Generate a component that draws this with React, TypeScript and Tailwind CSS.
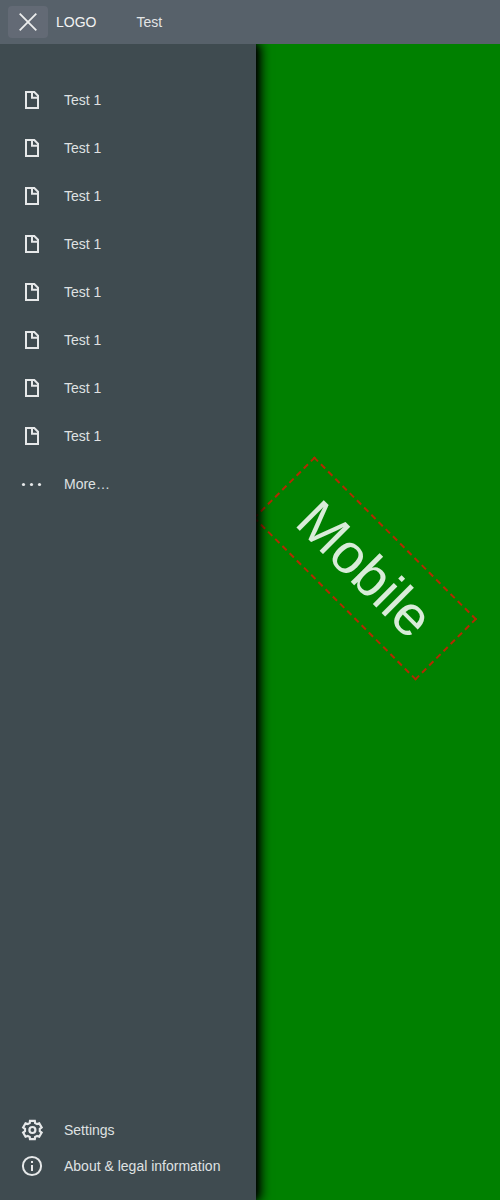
import type { ReactNode } from "react";

function FileIcon() {
  return (
    <svg className="size-6" viewBox="0 0 24 24" fill="none" stroke="#e6e8e9" strokeWidth="2">
      <path d="M6 4H14.3L18 7.7V20H6Z" />
      <path d="M12 4V9.8H18" />
    </svg>
  );
}

function MoreIcon() {
  return (
    <svg className="size-6" viewBox="0 0 24 24" fill="#e6e8e9">
      <circle cx="3.5" cy="12.5" r="1.6" />
      <circle cx="11.5" cy="12.5" r="1.6" />
      <circle cx="19.5" cy="12.5" r="1.6" />
    </svg>
  );
}

function GearIcon() {
  return (
    <svg className="size-6" viewBox="-12.4 -12 24 24" fill="none" stroke="#e6e8e9" strokeWidth="2.2">
      <path d="M-2.4 -9.2H2.4L2.7 -7L4.7 -5.9L6.85 -6.7L9.25 -2.55L7.4 -1.1V1.1L9.25 2.55L6.85 6.7L4.7 5.9L2.7 7L2.4 9.2H-2.4L-2.7 7L-4.7 5.9L-6.85 6.7L-9.25 2.55L-7.4 1.1V-1.1L-9.25 -2.55L-6.85 -6.7L-4.7 -5.9L-2.7 -7Z" />
      <circle r="3" />
    </svg>
  );
}

function InfoIcon() {
  return (
    <svg className="size-6" viewBox="0 0 24 24" fill="none" stroke="#e6e8e9" strokeWidth="2">
      <circle cx="12" cy="12" r="9.1" />
      <path d="M12 11V17M12 7V9" />
    </svg>
  );
}

function Item({ icon, label, compact }: { icon: ReactNode; label: string; compact?: boolean }) {
  return (
    <a className={`flex items-center gap-5 pl-5 text-sm text-[#dfe1e2] ${compact ? "h-9" : "h-12"}`}>
      {icon}
      <span>{label}</span>
    </a>
  );
}

export default function App() {
  const files = Array.from({ length: 8 }, (_, i) => i);
  return (
    <div className="flex h-[1200px] w-[500px] flex-col overflow-hidden bg-[#008000] font-['Liberation_Sans',sans-serif]">
      <header className="z-20 flex h-11 shrink-0 items-center bg-[#57616a] pl-2 text-sm text-[#e3e5e6]">
        <button className="flex h-8 w-10 items-center justify-center rounded bg-[#636a75]">
          <svg className="size-5" viewBox="0 0 20 20" stroke="#eceded" strokeWidth="1.8">
            <path d="M1.7 1.7L18.3 18.3M18.3 1.7L1.7 18.3" />
          </svg>
        </button>
        <span className="ml-2 text-[#f2f3f3]">LOGO</span>
        <span className="ml-10">Test</span>
      </header>
      <div className="flex min-h-0 flex-1">
        <nav className="z-10 flex w-64 shrink-0 flex-col bg-[#3f4b50] pt-8 pb-4 shadow-[5px_0_10px_0_#000,0_0_6px_0_#000]">
          {files.map((i) => (
            <Item key={i} icon={<FileIcon />} label="Test 1" />
          ))}
          <Item icon={<MoreIcon />} label="More…" />
          <div className="mt-auto">
            <Item compact icon={<GearIcon />} label="Settings" />
            <Item compact icon={<InfoIcon />} label="About & legal information" />
          </div>
        </nav>
        <main className="relative flex-1">
          <div className="absolute top-[480.5px] left-[-6px] flex h-[87px] w-[230px] rotate-45 items-center justify-center border-2 border-dashed border-[#b22a00] pl-px text-[56px] leading-none text-[#d9ecd9]">
            Mobile
          </div>
        </main>
      </div>
    </div>
  );
}
